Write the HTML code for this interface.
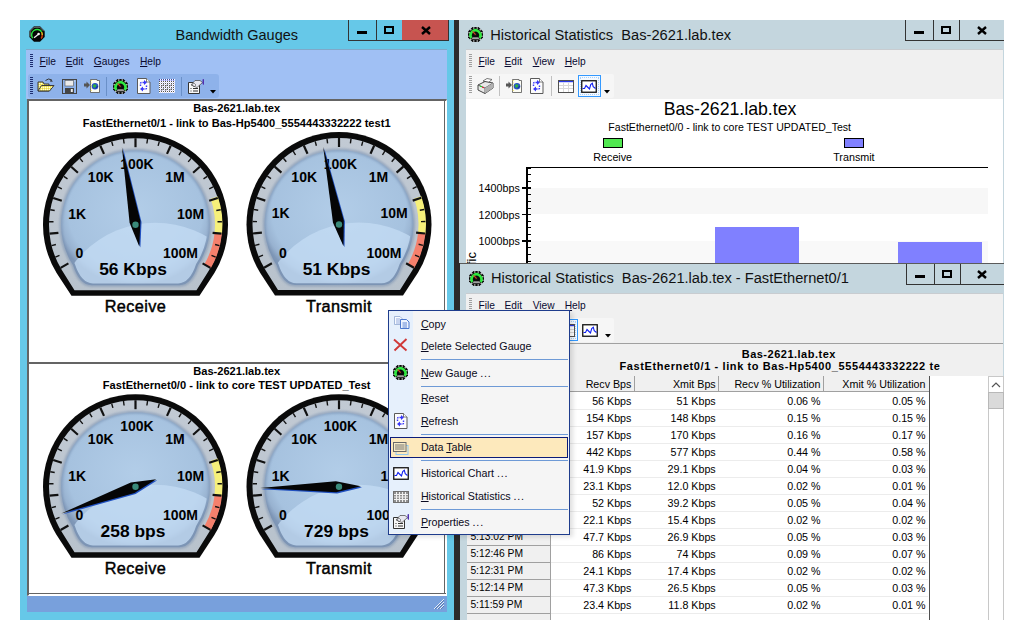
<!DOCTYPE html>
<html><head><meta charset="utf-8"><style>
*{margin:0;padding:0;box-sizing:border-box}
body{width:1024px;height:640px;background:#fff;position:relative;overflow:hidden;font-family:"Liberation Sans", sans-serif;color:#000}
.a{position:absolute}
.t{position:absolute;white-space:pre;line-height:1}
u{text-decoration:underline}
</style></head><body>
<div class="a" style="left:20px;top:20px;width:434px;height:600px;background:#66c8e8"></div>
<svg class="a" style="left:29px;top:26px" width="16" height="16" viewBox="0 0 16 16">
<path d="M5,0.3 H11 L15.7,5 V11 L11,15.7 H5 L0.3,11 V5Z" fill="#050505"/>
<path d="M5.2,1.2 H10.8 L14.8,5.2" fill="none" stroke="#c8c8c8" stroke-width="0.6"/><path d="M1.2,10.8 V5.2 L5.2,1.2" fill="none" stroke="#c8c8c8" stroke-width="0.6"/>
<path d="M3.6,12.2 A5.2,5.2 0 0 1 12.6,5.8" fill="none" stroke="#28e040" stroke-width="1.5"/>
<path d="M12.6,6 A5.2,5.2 0 0 1 13.2,9" fill="none" stroke="#f0c020" stroke-width="1.5"/>
<path d="M13.2,9 A5.2,5.2 0 0 1 12.2,12.5" fill="none" stroke="#d04010" stroke-width="1.5"/>
<line x1="5" y1="11.8" x2="9.5" y2="8.2" stroke="#f0f0f0" stroke-width="1.2"/><circle cx="9.6" cy="8" r="1.3" fill="#fafafa"/></svg>
<div class="t" style="left:175.5px;top:27.53px;font-size:14.5px;font-weight:normal;color:#111;">Bandwidth Gauges</div>
<div class="a" style="left:348px;top:20px;width:101px;height:21px;background:#66c8e8;border-left:1px solid #333;border-bottom:1px solid #333"></div>
<div class="a" style="left:376px;top:20px;width:1px;height:21px;background:#333"></div>
<div class="a" style="left:402px;top:20px;width:47px;height:21px;background:#c75450;border-bottom:1px solid #333;border-right:1px solid #333"></div>
<div class="a" style="left:357.0px;top:31px;width:10px;height:3px;background:#000"></div>
<div class="a" style="left:384.0px;top:26px;width:10px;height:8px;border:2px solid #000"></div>
<svg class="a" style="left:420.5px;top:26px" width="10" height="9" viewBox="0 0 10 9"><path d="M1,1 L9,8 M9,1 L1,8" stroke="#000" stroke-width="2.4"/></svg>
<div class="a" style="left:26px;top:49px;width:421px;height:50px;background:#a0c0f4"></div>
<div class="a" style="left:26px;top:49px;width:421px;height:1px;background:#80a8c8"></div>
<div class="a" style="left:28px;top:74px;width:191px;height:24px;background:#8eb2ea;border-radius:3px"></div>
<div class="a" style="left:30px;top:54px;width:3px;height:14px;background:repeating-linear-gradient(#1e2e70 0 1px, transparent 1px 2px)"></div>
<div class="a" style="left:30px;top:77px;width:3px;height:18px;background:repeating-linear-gradient(#1e2e70 0 1px, transparent 1px 2px)"></div>
<div class="t" style="left:39.6px;top:56.77px;font-size:10.2px;font-weight:normal;color:#0a0a30;"><u>F</u>ile</div>
<div class="t" style="left:65.7px;top:56.77px;font-size:10.2px;font-weight:normal;color:#0a0a30;"><u>E</u>dit</div>
<div class="t" style="left:93.8px;top:56.77px;font-size:10.2px;font-weight:normal;color:#0a0a30;"><u>G</u>auges</div>
<div class="t" style="left:140.0px;top:56.77px;font-size:10.2px;font-weight:normal;color:#0a0a30;"><u>H</u>elp</div>
<svg class="a" style="left:37px;top:77px" width="18" height="16" viewBox="0 0 18 16">
<defs><pattern id="fp3777" width="2" height="2" patternUnits="userSpaceOnUse"><rect width="2" height="2" fill="#f8f070"/><rect width="1" height="1" fill="#fffbe0"/><rect x="1" y="1" width="1" height="1" fill="#e0d050"/></pattern></defs>
<path d="M1,5 L1,14 L12,14 L12,7 L7,7 L6,5Z" fill="url(#fp3777)" stroke="#3a3a3a" stroke-width="1"/>
<path d="M1,14 L4.5,8.5 L17,8.5 L12.5,14Z" fill="url(#fp3777)" stroke="#3a3a3a" stroke-width="1"/>
<path d="M8.5,3.5 Q11.5,0.6 15,3.2" fill="none" stroke="#333" stroke-width="1"/><path d="M13.6,2.3 L16,4.5 L13.2,4.8Z" fill="#333"/></svg>
<svg class="a" style="left:62px;top:79px" width="15" height="15" viewBox="0 0 15 15">
<rect x="0.5" y="0.5" width="14" height="14" fill="none" stroke="#444" stroke-width="1"/>
<rect x="3" y="1.5" width="8.5" height="5.5" fill="#ececec" stroke="#555" stroke-width="0.6"/>
<rect x="12.2" y="1.5" width="1" height="1" fill="#eee"/>
<rect x="3" y="9" width="9" height="5" fill="#444"/><rect x="8.8" y="10" width="2" height="3" fill="#eee"/></svg>
<svg class="a" style="left:84px;top:79px" width="18" height="15" viewBox="0 0 18 15">
<path d="M0,4 L2.5,4 L2.5,2 L6,5.5 L2.5,9 L2.5,7 L0,7Z" fill="#555" transform="translate(0,0.5)"/>
<path d="M6.5,0.5 L13,0.5 L13,1.5 L15.5,1.5 L15.5,13.5 L6.5,13.5Z" fill="#fdfdf4" stroke="#555" stroke-width="0.8"/>
<path d="M7.2,1 V13" stroke="#f0e060" stroke-width="1" stroke-dasharray="1 1.5"/>
<circle cx="11" cy="7.2" r="3.3" fill="#2850c8"/><path d="M9,6 Q10.5,4.5 12.5,6 L11.5,8.5 Q10,9 9.2,8Z" fill="#30b040"/><path d="M11.5,9 Q13,8.5 13.6,7" fill="none" stroke="#103080" stroke-width="0.8"/></svg>
<div class="a" style="left:106px;top:77px;width:1px;height:19px;background:#6a90c8"></div>
<svg class="a" style="left:113px;top:79px" width="15" height="15" viewBox="0 0 15 15">
<path d="M4.5,0 H10.5 L15,4.5 V10.5 L10.5,15 H4.5 L0,10.5 V4.5Z" fill="#0a0a0a"/>
<circle cx="7.5" cy="7.5" r="7" fill="#0a0a0a"/><circle cx="13.88" cy="9.21" r="0.75" fill="#f4f4f4"/><circle cx="12.17" cy="12.17" r="0.75" fill="#f4f4f4"/><circle cx="9.21" cy="13.88" r="0.75" fill="#f4f4f4"/><circle cx="5.79" cy="13.88" r="0.75" fill="#f4f4f4"/><circle cx="2.83" cy="12.17" r="0.75" fill="#f4f4f4"/><circle cx="1.12" cy="9.21" r="0.75" fill="#f4f4f4"/><circle cx="1.12" cy="5.79" r="0.75" fill="#f4f4f4"/><circle cx="2.83" cy="2.83" r="0.75" fill="#f4f4f4"/><circle cx="5.79" cy="1.12" r="0.75" fill="#f4f4f4"/><circle cx="9.21" cy="1.12" r="0.75" fill="#f4f4f4"/><circle cx="12.17" cy="2.83" r="0.75" fill="#f4f4f4"/><circle cx="13.88" cy="5.79" r="0.75" fill="#f4f4f4"/>
<path d="M3.4,11 A4.9,4.9 0 1 1 11.6,11" fill="none" stroke="#30e840" stroke-width="2.6"/>
<path d="M3.6,12.2 L11.4,12.2 L10.4,10.2 L4.6,10.2Z" fill="#a0a0a0"/>
<circle cx="7.5" cy="7.5" r="1.8" fill="#111"/>
<line x1="4.6" y1="4.4" x2="7.6" y2="7.6" stroke="#d04020" stroke-width="1.3"/></svg>
<svg class="a" style="left:137px;top:78px" width="14" height="16" viewBox="0 0 14 16">
<path d="M0.5,0.5 L9.5,0.5 L13,4 L13,15.5 L0.5,15.5Z" fill="#fcfcfc" stroke="#5a5a5a" stroke-width="1"/>
<path d="M9.5,0.5 V4 H13" fill="#fff" stroke="#5a5a5a" stroke-width="0.8"/>
<path d="M3.5,8 V5.5 Q3.5,4.5 5,4.5 H7.5" fill="none" stroke="#3838f8" stroke-width="1.4" stroke-dasharray="1.6 0.8"/>
<path d="M7,2 L10,4.5 L7,7Z" fill="#3838f8"/>
<path d="M9.5,7.5 V10 Q9.5,11 8,11 H5.5" fill="none" stroke="#3838f8" stroke-width="1.4" stroke-dasharray="1.6 0.8"/>
<path d="M6,8.5 L3,11 L6,13.5Z" fill="#3838f8"/></svg>
<svg class="a" style="left:159px;top:79px" width="16" height="14" viewBox="0 0 16 14">
<defs><pattern id="gp15979" width="2" height="2" patternUnits="userSpaceOnUse"><rect width="2" height="2" fill="#fff"/><rect width="1" height="1" fill="#555"/><rect x="1" y="1" width="1" height="1" fill="#d8d8f8"/></pattern></defs>
<rect x="0" y="0" width="16" height="14" fill="url(#gp15979)"/>
<path d="M0,1 H15" stroke="#3040f0" stroke-width="1" stroke-dasharray="1 1"/>
<path d="M2,12 L5,9 M6,12 L9,9 M10,12 L13,9 M2,8 L5,5 M6,8 L9,5 M10,8 L13,5" stroke="#555" stroke-width="0.8" opacity="0.6"/></svg>
<div class="a" style="left:181px;top:77px;width:1px;height:19px;background:#6a90c8"></div>
<svg class="a" style="left:188px;top:79px" width="17" height="15" viewBox="0 0 17 15">
<path d="M0.5,3.5 L11.5,3.5 L11.5,14.5 L0.5,14.5Z" fill="#f8f8f8" stroke="#333" stroke-width="1"/>
<path d="M2.5,9.5 H3.5 M5,9.5 H10 M2.5,12 H3.5 M5,12 H10" stroke="#333" stroke-width="1"/>
<path d="M3,6 L7,1.5 L12,1.5 L14.5,3.5 L9,8.5Z" fill="#e8e8f0" stroke="#444" stroke-width="0.7"/>
<path d="M4,6 L6,4 L8,6 L6,8Z" fill="none" stroke="#555" stroke-width="0.6"/>
<path d="M14.5,0.5 L16,0 L16,6 L14.5,5Z" fill="#5030b0"/></svg>
<svg class="a" style="left:210px;top:90px" width="7" height="4"><path d="M0,0 H6 L3,3.5Z" fill="#000"/></svg>
<div class="a" style="left:27px;top:99px;width:420px;height:497px;background:#fff;border-top:2px solid #646464;border-left:2px solid #646464;border-bottom:1px solid #fff;border-right:1px solid #fff"></div>
<div class="a" style="left:29px;top:593px;width:417px;height:1px;background:#646464"></div>
<div class="a" style="left:444px;top:101px;width:1px;height:493px;background:#646464"></div>
<div class="a" style="left:29px;top:362px;width:416px;height:2px;background:#646464"></div>
<div class="a" style="left:27px;top:596px;width:420px;height:16px;background:#78a0dc"></div>
<svg class="a" style="left:433px;top:598px" width="12" height="12"><path d="M11,1 L1,11 M11,4 L4,11 M11,7 L7,11" stroke="#e8eef8" stroke-width="1"/><path d="M11,2 L2,11 M11,5 L5,11 M11,8 L8,11" stroke="#5070a8" stroke-width="0.8"/></svg>
<div class="t" style="left:-63.3px;width:600px;text-align:center;top:103.40px;font-size:11.1px;font-weight:bold;color:#000;">Bas-2621.lab.tex</div>
<div class="t" style="left:-63.3px;width:600px;text-align:center;top:117.50px;font-size:11.1px;font-weight:bold;color:#000;">FastEthernet0/1 - link to Bas-Hp5400_5554443332222 test1</div>
<div class="t" style="left:-63.3px;width:600px;text-align:center;top:365.90px;font-size:11.1px;font-weight:bold;color:#000;">Bas-2621.lab.tex</div>
<div class="t" style="left:-63.3px;width:600px;text-align:center;top:380.00px;font-size:11.1px;font-weight:bold;color:#000;">FastEthernet0/0 - link to core TEST UPDATED_Test</div>
<svg width="1024" height="640" style="position:absolute;left:0;top:0" font-family='"Liberation Sans", sans-serif'>
<defs>
<radialGradient id="face" cx="0.5" cy="0.45" r="0.55">
<stop offset="0" stop-color="#b2cde8"/><stop offset="0.82" stop-color="#a6c2df"/><stop offset="0.93" stop-color="#98b2d0"/><stop offset="1" stop-color="#8098b8"/>
</radialGradient>
<filter id="blur1" x="-10%" y="-10%" width="120%" height="120%"><feGaussianBlur stdDeviation="1"/></filter>
<linearGradient id="band" x1="0" y1="0" x2="0" y2="1">
<stop offset="0" stop-color="#c2cad4"/><stop offset="1" stop-color="#b8c2cc"/>
</linearGradient>
</defs>
<path d="M56.6,273.0 A92.5,92.5 0 1 1 214.4,273.0 L199.5,295.7 L71.5,295.7 Z" fill="#0a0a0a"/>
<path d="M62.1,270.5 A86.5,86.5 0 1 1 208.9,270.5 L196.5,290.2 L74.5,290.2 Z" fill="url(#band)"/>
<path d="M217.8,196.4 A87,87 0 0 1 222.0,233.8 L214.6,233.0 A79.5,79.5 0 0 0 210.7,198.8 Z" fill="#f6f07a"/>
<path d="M222.0,233.8 A87,87 0 0 1 210.8,268.2 L204.3,264.4 A79.5,79.5 0 0 0 214.6,233.0 Z" fill="#f5806c"/>
<path d="M73.0,265.3 A74.5,74.5 0 1 1 198.0,265.3 Q191.5,285.2 179.5,285.2 L91.5,285.2 Q79.5,285.2 73.0,265.3 Z" fill="url(#face)"/>
<path d="M73.0,265.3 A74.5,74.5 0 1 1 198.0,265.3 Q191.5,285.2 179.5,285.2 L91.5,285.2 Q79.5,285.2 73.0,265.3 Z" fill="none" stroke="#7890b0" stroke-width="3" opacity="0.6" filter="url(#blur1)"/>
<g clip-path="url(#fc1)"><circle cx="155.5" cy="324.7" r="102" fill="#c4dcf4" opacity="0.75"/></g>
<clipPath id="fc1"><path d="M73.0,265.3 A74.5,74.5 0 1 1 198.0,265.3 Q191.5,285.2 179.5,285.2 L91.5,285.2 Q79.5,285.2 73.0,265.3 Z" transform="translate(135.5,224.7) scale(0.97) translate(-135.5,-224.7)"/></clipPath>
<line x1="60.6" y1="267.9" x2="68.4" y2="263.4" stroke="#111" stroke-width="2.2"/>
<line x1="55.3" y1="257.1" x2="59.5" y2="255.4" stroke="#111" stroke-width="1.4"/>
<line x1="51.6" y1="245.6" x2="55.9" y2="244.5" stroke="#111" stroke-width="1.4"/>
<line x1="49.5" y1="233.7" x2="58.4" y2="232.8" stroke="#111" stroke-width="2.2"/>
<line x1="49.1" y1="221.7" x2="53.5" y2="221.8" stroke="#111" stroke-width="1.4"/>
<line x1="50.3" y1="209.7" x2="54.7" y2="210.5" stroke="#111" stroke-width="1.4"/>
<line x1="53.2" y1="198.0" x2="61.8" y2="200.8" stroke="#111" stroke-width="2.2"/>
<line x1="57.8" y1="186.8" x2="61.8" y2="188.8" stroke="#111" stroke-width="1.4"/>
<line x1="63.8" y1="176.3" x2="67.5" y2="178.8" stroke="#111" stroke-width="1.4"/>
<line x1="71.2" y1="166.8" x2="77.9" y2="172.8" stroke="#111" stroke-width="2.2"/>
<line x1="79.9" y1="158.4" x2="82.8" y2="161.9" stroke="#111" stroke-width="1.4"/>
<line x1="89.7" y1="151.3" x2="92.0" y2="155.2" stroke="#111" stroke-width="1.4"/>
<line x1="100.3" y1="145.7" x2="104.0" y2="153.9" stroke="#111" stroke-width="2.2"/>
<line x1="111.7" y1="141.6" x2="112.9" y2="145.9" stroke="#111" stroke-width="1.4"/>
<line x1="123.5" y1="139.0" x2="124.1" y2="143.5" stroke="#111" stroke-width="1.4"/>
<line x1="135.5" y1="138.2" x2="135.5" y2="147.2" stroke="#111" stroke-width="2.2"/>
<line x1="147.5" y1="139.0" x2="146.9" y2="143.5" stroke="#111" stroke-width="1.4"/>
<line x1="159.3" y1="141.6" x2="158.1" y2="145.9" stroke="#111" stroke-width="1.4"/>
<line x1="170.7" y1="145.7" x2="167.0" y2="153.9" stroke="#111" stroke-width="2.2"/>
<line x1="181.3" y1="151.3" x2="179.0" y2="155.2" stroke="#111" stroke-width="1.4"/>
<line x1="191.1" y1="158.4" x2="188.2" y2="161.9" stroke="#111" stroke-width="1.4"/>
<line x1="199.8" y1="166.8" x2="193.1" y2="172.8" stroke="#111" stroke-width="2.2"/>
<line x1="207.2" y1="176.3" x2="203.5" y2="178.8" stroke="#111" stroke-width="1.4"/>
<line x1="213.2" y1="186.8" x2="209.2" y2="188.8" stroke="#111" stroke-width="1.4"/>
<line x1="217.8" y1="198.0" x2="209.2" y2="200.8" stroke="#111" stroke-width="2.2"/>
<line x1="220.7" y1="209.7" x2="216.3" y2="210.5" stroke="#111" stroke-width="1.4"/>
<line x1="221.9" y1="221.7" x2="217.5" y2="221.8" stroke="#111" stroke-width="1.4"/>
<line x1="221.5" y1="233.7" x2="212.6" y2="232.8" stroke="#111" stroke-width="2.2"/>
<line x1="219.4" y1="245.6" x2="215.1" y2="244.5" stroke="#111" stroke-width="1.4"/>
<line x1="215.7" y1="257.1" x2="211.5" y2="255.4" stroke="#111" stroke-width="1.4"/>
<line x1="210.4" y1="267.9" x2="202.6" y2="263.4" stroke="#111" stroke-width="2.2"/>
<text transform="translate(136.9,169.3) scale(1,1.06)" text-anchor="middle" font-size="14" font-weight="bold">100K</text>
<text transform="translate(100.7,182.4) scale(1,1.06)" text-anchor="middle" font-size="14" font-weight="bold">10K</text>
<text transform="translate(175.0,182.4) scale(1,1.06)" text-anchor="middle" font-size="14" font-weight="bold">1M</text>
<text transform="translate(77.2,218.5) scale(1,1.06)" text-anchor="middle" font-size="14" font-weight="bold">1K</text>
<text transform="translate(190.5,218.5) scale(1,1.06)" text-anchor="middle" font-size="14" font-weight="bold">10M</text>
<text transform="translate(79.5,258.4) scale(1,1.06)" text-anchor="middle" font-size="14" font-weight="bold">0</text>
<text transform="translate(180.5,258.4) scale(1,1.06)" text-anchor="middle" font-size="14" font-weight="bold">100M</text>
<text x="133.0" y="275.4" text-anchor="middle" font-size="17.4" font-weight="bold">56 Kbps</text>
<text x="135.5" y="311.7" text-anchor="middle" font-size="16.3" stroke="#000" stroke-width="0.45" letter-spacing="0.4">Receive</text>
<polygon points="121.9,146.9 129.6,222.7 139.3,246.4 140.4,220.8" fill="#2050c0" transform="translate(1.1,1.1)"/>
<polygon points="121.9,146.9 129.6,222.7 139.3,246.4 140.4,220.8" fill="#050505"/>
<circle cx="135.5" cy="224.7" r="3.2" fill="#3a8a7a"/>
<path d="M260.1,272.8 A92.5,92.5 0 1 1 417.9,272.8 L403.0,295.5 L275.0,295.5 Z" fill="#0a0a0a"/>
<path d="M265.6,270.3 A86.5,86.5 0 1 1 412.4,270.3 L400.0,290.0 L278.0,290.0 Z" fill="url(#band)"/>
<path d="M421.3,196.2 A87,87 0 0 1 425.5,233.6 L418.1,232.8 A79.5,79.5 0 0 0 414.2,198.6 Z" fill="#f6f07a"/>
<path d="M425.5,233.6 A87,87 0 0 1 414.3,268.0 L407.8,264.2 A79.5,79.5 0 0 0 418.1,232.8 Z" fill="#f5806c"/>
<path d="M276.5,265.1 A74.5,74.5 0 1 1 401.5,265.1 Q395.0,285.0 383.0,285.0 L295.0,285.0 Q283.0,285.0 276.5,265.1 Z" fill="url(#face)"/>
<path d="M276.5,265.1 A74.5,74.5 0 1 1 401.5,265.1 Q395.0,285.0 383.0,285.0 L295.0,285.0 Q283.0,285.0 276.5,265.1 Z" fill="none" stroke="#7890b0" stroke-width="3" opacity="0.6" filter="url(#blur1)"/>
<g clip-path="url(#fc2)"><circle cx="359" cy="324.5" r="102" fill="#c4dcf4" opacity="0.75"/></g>
<clipPath id="fc2"><path d="M276.5,265.1 A74.5,74.5 0 1 1 401.5,265.1 Q395.0,285.0 383.0,285.0 L295.0,285.0 Q283.0,285.0 276.5,265.1 Z" transform="translate(339.0,224.5) scale(0.97) translate(-339.0,-224.5)"/></clipPath>
<line x1="264.1" y1="267.8" x2="271.9" y2="263.2" stroke="#111" stroke-width="2.2"/>
<line x1="258.8" y1="256.9" x2="263.0" y2="255.2" stroke="#111" stroke-width="1.4"/>
<line x1="255.1" y1="245.4" x2="259.4" y2="244.3" stroke="#111" stroke-width="1.4"/>
<line x1="253.0" y1="233.5" x2="261.9" y2="232.6" stroke="#111" stroke-width="2.2"/>
<line x1="252.6" y1="221.5" x2="257.0" y2="221.6" stroke="#111" stroke-width="1.4"/>
<line x1="253.8" y1="209.5" x2="258.2" y2="210.3" stroke="#111" stroke-width="1.4"/>
<line x1="256.7" y1="197.8" x2="265.3" y2="200.6" stroke="#111" stroke-width="2.2"/>
<line x1="261.3" y1="186.6" x2="265.3" y2="188.6" stroke="#111" stroke-width="1.4"/>
<line x1="267.3" y1="176.1" x2="271.0" y2="178.6" stroke="#111" stroke-width="1.4"/>
<line x1="274.7" y1="166.6" x2="281.4" y2="172.6" stroke="#111" stroke-width="2.2"/>
<line x1="283.4" y1="158.2" x2="286.3" y2="161.7" stroke="#111" stroke-width="1.4"/>
<line x1="293.2" y1="151.1" x2="295.5" y2="155.0" stroke="#111" stroke-width="1.4"/>
<line x1="303.8" y1="145.5" x2="307.5" y2="153.7" stroke="#111" stroke-width="2.2"/>
<line x1="315.2" y1="141.4" x2="316.4" y2="145.7" stroke="#111" stroke-width="1.4"/>
<line x1="327.0" y1="138.8" x2="327.6" y2="143.3" stroke="#111" stroke-width="1.4"/>
<line x1="339.0" y1="138.0" x2="339.0" y2="147.0" stroke="#111" stroke-width="2.2"/>
<line x1="351.0" y1="138.8" x2="350.4" y2="143.3" stroke="#111" stroke-width="1.4"/>
<line x1="362.8" y1="141.4" x2="361.6" y2="145.7" stroke="#111" stroke-width="1.4"/>
<line x1="374.2" y1="145.5" x2="370.5" y2="153.7" stroke="#111" stroke-width="2.2"/>
<line x1="384.8" y1="151.1" x2="382.5" y2="155.0" stroke="#111" stroke-width="1.4"/>
<line x1="394.6" y1="158.2" x2="391.7" y2="161.7" stroke="#111" stroke-width="1.4"/>
<line x1="403.3" y1="166.6" x2="396.6" y2="172.6" stroke="#111" stroke-width="2.2"/>
<line x1="410.7" y1="176.1" x2="407.0" y2="178.6" stroke="#111" stroke-width="1.4"/>
<line x1="416.7" y1="186.6" x2="412.7" y2="188.6" stroke="#111" stroke-width="1.4"/>
<line x1="421.3" y1="197.8" x2="412.7" y2="200.6" stroke="#111" stroke-width="2.2"/>
<line x1="424.2" y1="209.5" x2="419.8" y2="210.3" stroke="#111" stroke-width="1.4"/>
<line x1="425.4" y1="221.5" x2="421.0" y2="221.6" stroke="#111" stroke-width="1.4"/>
<line x1="425.0" y1="233.5" x2="416.1" y2="232.6" stroke="#111" stroke-width="2.2"/>
<line x1="422.9" y1="245.4" x2="418.6" y2="244.3" stroke="#111" stroke-width="1.4"/>
<line x1="419.2" y1="256.9" x2="415.0" y2="255.2" stroke="#111" stroke-width="1.4"/>
<line x1="413.9" y1="267.8" x2="406.1" y2="263.2" stroke="#111" stroke-width="2.2"/>
<text transform="translate(340.4,169.1) scale(1,1.06)" text-anchor="middle" font-size="14" font-weight="bold">100K</text>
<text transform="translate(304.2,182.2) scale(1,1.06)" text-anchor="middle" font-size="14" font-weight="bold">10K</text>
<text transform="translate(378.5,182.2) scale(1,1.06)" text-anchor="middle" font-size="14" font-weight="bold">1M</text>
<text transform="translate(280.7,218.3) scale(1,1.06)" text-anchor="middle" font-size="14" font-weight="bold">1K</text>
<text transform="translate(394.0,218.3) scale(1,1.06)" text-anchor="middle" font-size="14" font-weight="bold">10M</text>
<text transform="translate(283.0,258.2) scale(1,1.06)" text-anchor="middle" font-size="14" font-weight="bold">0</text>
<text transform="translate(384.0,258.2) scale(1,1.06)" text-anchor="middle" font-size="14" font-weight="bold">100M</text>
<text x="336.5" y="275.2" text-anchor="middle" font-size="17.4" font-weight="bold">51 Kbps</text>
<text x="339.0" y="311.5" text-anchor="middle" font-size="16.3" stroke="#000" stroke-width="0.45" letter-spacing="0.4">Transmit</text>
<polygon points="323.2,147.1 333.0,222.7 343.4,246.1 343.8,220.5" fill="#2050c0" transform="translate(1.1,1.1)"/>
<polygon points="323.2,147.1 333.0,222.7 343.4,246.1 343.8,220.5" fill="#050505"/>
<circle cx="339" cy="224.5" r="3.2" fill="#3a8a7a"/>
<path d="M56.6,535.0 A92.5,92.5 0 1 1 214.4,535.0 L199.5,557.7 L71.5,557.7 Z" fill="#0a0a0a"/>
<path d="M62.1,532.5 A86.5,86.5 0 1 1 208.9,532.5 L196.5,552.2 L74.5,552.2 Z" fill="url(#band)"/>
<path d="M217.8,458.4 A87,87 0 0 1 222.0,495.8 L214.6,495.0 A79.5,79.5 0 0 0 210.7,460.8 Z" fill="#f6f07a"/>
<path d="M222.0,495.8 A87,87 0 0 1 210.8,530.2 L204.3,526.4 A79.5,79.5 0 0 0 214.6,495.0 Z" fill="#f5806c"/>
<path d="M73.0,527.3 A74.5,74.5 0 1 1 198.0,527.3 Q191.5,547.2 179.5,547.2 L91.5,547.2 Q79.5,547.2 73.0,527.3 Z" fill="url(#face)"/>
<path d="M73.0,527.3 A74.5,74.5 0 1 1 198.0,527.3 Q191.5,547.2 179.5,547.2 L91.5,547.2 Q79.5,547.2 73.0,527.3 Z" fill="none" stroke="#7890b0" stroke-width="3" opacity="0.6" filter="url(#blur1)"/>
<g clip-path="url(#fc3)"><circle cx="155.5" cy="586.7" r="102" fill="#c4dcf4" opacity="0.75"/></g>
<clipPath id="fc3"><path d="M73.0,527.3 A74.5,74.5 0 1 1 198.0,527.3 Q191.5,547.2 179.5,547.2 L91.5,547.2 Q79.5,547.2 73.0,527.3 Z" transform="translate(135.5,486.7) scale(0.97) translate(-135.5,-486.7)"/></clipPath>
<line x1="60.6" y1="530.0" x2="68.4" y2="525.5" stroke="#111" stroke-width="2.2"/>
<line x1="55.3" y1="519.1" x2="59.5" y2="517.4" stroke="#111" stroke-width="1.4"/>
<line x1="51.6" y1="507.6" x2="55.9" y2="506.5" stroke="#111" stroke-width="1.4"/>
<line x1="49.5" y1="495.7" x2="58.4" y2="494.8" stroke="#111" stroke-width="2.2"/>
<line x1="49.1" y1="483.7" x2="53.5" y2="483.8" stroke="#111" stroke-width="1.4"/>
<line x1="50.3" y1="471.7" x2="54.7" y2="472.5" stroke="#111" stroke-width="1.4"/>
<line x1="53.2" y1="460.0" x2="61.8" y2="462.8" stroke="#111" stroke-width="2.2"/>
<line x1="57.8" y1="448.8" x2="61.8" y2="450.8" stroke="#111" stroke-width="1.4"/>
<line x1="63.8" y1="438.3" x2="67.5" y2="440.8" stroke="#111" stroke-width="1.4"/>
<line x1="71.2" y1="428.8" x2="77.9" y2="434.8" stroke="#111" stroke-width="2.2"/>
<line x1="79.9" y1="420.4" x2="82.8" y2="423.9" stroke="#111" stroke-width="1.4"/>
<line x1="89.7" y1="413.3" x2="92.0" y2="417.2" stroke="#111" stroke-width="1.4"/>
<line x1="100.3" y1="407.7" x2="104.0" y2="415.9" stroke="#111" stroke-width="2.2"/>
<line x1="111.7" y1="403.6" x2="112.9" y2="407.9" stroke="#111" stroke-width="1.4"/>
<line x1="123.5" y1="401.0" x2="124.1" y2="405.5" stroke="#111" stroke-width="1.4"/>
<line x1="135.5" y1="400.2" x2="135.5" y2="409.2" stroke="#111" stroke-width="2.2"/>
<line x1="147.5" y1="401.0" x2="146.9" y2="405.5" stroke="#111" stroke-width="1.4"/>
<line x1="159.3" y1="403.6" x2="158.1" y2="407.9" stroke="#111" stroke-width="1.4"/>
<line x1="170.7" y1="407.7" x2="167.0" y2="415.9" stroke="#111" stroke-width="2.2"/>
<line x1="181.3" y1="413.3" x2="179.0" y2="417.2" stroke="#111" stroke-width="1.4"/>
<line x1="191.1" y1="420.4" x2="188.2" y2="423.9" stroke="#111" stroke-width="1.4"/>
<line x1="199.8" y1="428.8" x2="193.1" y2="434.8" stroke="#111" stroke-width="2.2"/>
<line x1="207.2" y1="438.3" x2="203.5" y2="440.8" stroke="#111" stroke-width="1.4"/>
<line x1="213.2" y1="448.8" x2="209.2" y2="450.8" stroke="#111" stroke-width="1.4"/>
<line x1="217.8" y1="460.0" x2="209.2" y2="462.8" stroke="#111" stroke-width="2.2"/>
<line x1="220.7" y1="471.7" x2="216.3" y2="472.5" stroke="#111" stroke-width="1.4"/>
<line x1="221.9" y1="483.7" x2="217.5" y2="483.8" stroke="#111" stroke-width="1.4"/>
<line x1="221.5" y1="495.7" x2="212.6" y2="494.8" stroke="#111" stroke-width="2.2"/>
<line x1="219.4" y1="507.6" x2="215.1" y2="506.5" stroke="#111" stroke-width="1.4"/>
<line x1="215.7" y1="519.1" x2="211.5" y2="517.4" stroke="#111" stroke-width="1.4"/>
<line x1="210.4" y1="529.9" x2="202.6" y2="525.4" stroke="#111" stroke-width="2.2"/>
<text transform="translate(136.9,431.3) scale(1,1.06)" text-anchor="middle" font-size="14" font-weight="bold">100K</text>
<text transform="translate(100.7,444.4) scale(1,1.06)" text-anchor="middle" font-size="14" font-weight="bold">10K</text>
<text transform="translate(175.0,444.4) scale(1,1.06)" text-anchor="middle" font-size="14" font-weight="bold">1M</text>
<text transform="translate(77.2,480.5) scale(1,1.06)" text-anchor="middle" font-size="14" font-weight="bold">1K</text>
<text transform="translate(190.5,480.5) scale(1,1.06)" text-anchor="middle" font-size="14" font-weight="bold">10M</text>
<text transform="translate(79.5,520.4) scale(1,1.06)" text-anchor="middle" font-size="14" font-weight="bold">0</text>
<text transform="translate(180.5,520.4) scale(1,1.06)" text-anchor="middle" font-size="14" font-weight="bold">100M</text>
<text x="133.0" y="537.4" text-anchor="middle" font-size="17.4" font-weight="bold">258 bps</text>
<text x="135.5" y="573.7" text-anchor="middle" font-size="16.3" stroke="#000" stroke-width="0.45" letter-spacing="0.4">Receive</text>
<polygon points="61.2,513.5 134.5,492.9 156.2,479.2 130.8,482.5" fill="#2050c0" transform="translate(1.1,1.1)"/>
<polygon points="61.2,513.5 134.5,492.9 156.2,479.2 130.8,482.5" fill="#050505"/>
<circle cx="135.5" cy="486.7" r="3.2" fill="#3a8a7a"/>
<path d="M260.1,535.0 A92.5,92.5 0 1 1 417.9,535.0 L403.0,557.7 L275.0,557.7 Z" fill="#0a0a0a"/>
<path d="M265.6,532.5 A86.5,86.5 0 1 1 412.4,532.5 L400.0,552.2 L278.0,552.2 Z" fill="url(#band)"/>
<path d="M421.3,458.4 A87,87 0 0 1 425.5,495.8 L418.1,495.0 A79.5,79.5 0 0 0 414.2,460.8 Z" fill="#f6f07a"/>
<path d="M425.5,495.8 A87,87 0 0 1 414.3,530.2 L407.8,526.4 A79.5,79.5 0 0 0 418.1,495.0 Z" fill="#f5806c"/>
<path d="M276.5,527.3 A74.5,74.5 0 1 1 401.5,527.3 Q395.0,547.2 383.0,547.2 L295.0,547.2 Q283.0,547.2 276.5,527.3 Z" fill="url(#face)"/>
<path d="M276.5,527.3 A74.5,74.5 0 1 1 401.5,527.3 Q395.0,547.2 383.0,547.2 L295.0,547.2 Q283.0,547.2 276.5,527.3 Z" fill="none" stroke="#7890b0" stroke-width="3" opacity="0.6" filter="url(#blur1)"/>
<g clip-path="url(#fc4)"><circle cx="359" cy="586.7" r="102" fill="#c4dcf4" opacity="0.75"/></g>
<clipPath id="fc4"><path d="M276.5,527.3 A74.5,74.5 0 1 1 401.5,527.3 Q395.0,547.2 383.0,547.2 L295.0,547.2 Q283.0,547.2 276.5,527.3 Z" transform="translate(339.0,486.7) scale(0.97) translate(-339.0,-486.7)"/></clipPath>
<line x1="264.1" y1="530.0" x2="271.9" y2="525.5" stroke="#111" stroke-width="2.2"/>
<line x1="258.8" y1="519.1" x2="263.0" y2="517.4" stroke="#111" stroke-width="1.4"/>
<line x1="255.1" y1="507.6" x2="259.4" y2="506.5" stroke="#111" stroke-width="1.4"/>
<line x1="253.0" y1="495.7" x2="261.9" y2="494.8" stroke="#111" stroke-width="2.2"/>
<line x1="252.6" y1="483.7" x2="257.0" y2="483.8" stroke="#111" stroke-width="1.4"/>
<line x1="253.8" y1="471.7" x2="258.2" y2="472.5" stroke="#111" stroke-width="1.4"/>
<line x1="256.7" y1="460.0" x2="265.3" y2="462.8" stroke="#111" stroke-width="2.2"/>
<line x1="261.3" y1="448.8" x2="265.3" y2="450.8" stroke="#111" stroke-width="1.4"/>
<line x1="267.3" y1="438.3" x2="271.0" y2="440.8" stroke="#111" stroke-width="1.4"/>
<line x1="274.7" y1="428.8" x2="281.4" y2="434.8" stroke="#111" stroke-width="2.2"/>
<line x1="283.4" y1="420.4" x2="286.3" y2="423.9" stroke="#111" stroke-width="1.4"/>
<line x1="293.2" y1="413.3" x2="295.5" y2="417.2" stroke="#111" stroke-width="1.4"/>
<line x1="303.8" y1="407.7" x2="307.5" y2="415.9" stroke="#111" stroke-width="2.2"/>
<line x1="315.2" y1="403.6" x2="316.4" y2="407.9" stroke="#111" stroke-width="1.4"/>
<line x1="327.0" y1="401.0" x2="327.6" y2="405.5" stroke="#111" stroke-width="1.4"/>
<line x1="339.0" y1="400.2" x2="339.0" y2="409.2" stroke="#111" stroke-width="2.2"/>
<line x1="351.0" y1="401.0" x2="350.4" y2="405.5" stroke="#111" stroke-width="1.4"/>
<line x1="362.8" y1="403.6" x2="361.6" y2="407.9" stroke="#111" stroke-width="1.4"/>
<line x1="374.2" y1="407.7" x2="370.5" y2="415.9" stroke="#111" stroke-width="2.2"/>
<line x1="384.8" y1="413.3" x2="382.5" y2="417.2" stroke="#111" stroke-width="1.4"/>
<line x1="394.6" y1="420.4" x2="391.7" y2="423.9" stroke="#111" stroke-width="1.4"/>
<line x1="403.3" y1="428.8" x2="396.6" y2="434.8" stroke="#111" stroke-width="2.2"/>
<line x1="410.7" y1="438.3" x2="407.0" y2="440.8" stroke="#111" stroke-width="1.4"/>
<line x1="416.7" y1="448.8" x2="412.7" y2="450.8" stroke="#111" stroke-width="1.4"/>
<line x1="421.3" y1="460.0" x2="412.7" y2="462.8" stroke="#111" stroke-width="2.2"/>
<line x1="424.2" y1="471.7" x2="419.8" y2="472.5" stroke="#111" stroke-width="1.4"/>
<line x1="425.4" y1="483.7" x2="421.0" y2="483.8" stroke="#111" stroke-width="1.4"/>
<line x1="425.0" y1="495.7" x2="416.1" y2="494.8" stroke="#111" stroke-width="2.2"/>
<line x1="422.9" y1="507.6" x2="418.6" y2="506.5" stroke="#111" stroke-width="1.4"/>
<line x1="419.2" y1="519.1" x2="415.0" y2="517.4" stroke="#111" stroke-width="1.4"/>
<line x1="413.9" y1="529.9" x2="406.1" y2="525.4" stroke="#111" stroke-width="2.2"/>
<text transform="translate(340.4,431.3) scale(1,1.06)" text-anchor="middle" font-size="14" font-weight="bold">100K</text>
<text transform="translate(304.2,444.4) scale(1,1.06)" text-anchor="middle" font-size="14" font-weight="bold">10K</text>
<text transform="translate(378.5,444.4) scale(1,1.06)" text-anchor="middle" font-size="14" font-weight="bold">1M</text>
<text transform="translate(280.7,480.5) scale(1,1.06)" text-anchor="middle" font-size="14" font-weight="bold">1K</text>
<text transform="translate(394.0,480.5) scale(1,1.06)" text-anchor="middle" font-size="14" font-weight="bold">10M</text>
<text transform="translate(283.0,520.4) scale(1,1.06)" text-anchor="middle" font-size="14" font-weight="bold">0</text>
<text transform="translate(384.0,520.4) scale(1,1.06)" text-anchor="middle" font-size="14" font-weight="bold">100M</text>
<text x="336.5" y="537.4" text-anchor="middle" font-size="17.4" font-weight="bold">729 bps</text>
<text x="339.0" y="573.7" text-anchor="middle" font-size="16.3" stroke="#000" stroke-width="0.45" letter-spacing="0.4">Transmit</text>
<polygon points="260.0,488.1 336.1,492.3 361.0,486.3 335.9,481.3" fill="#2050c0" transform="translate(1.1,1.1)"/>
<polygon points="260.0,488.1 336.1,492.3 361.0,486.3 335.9,481.3" fill="#050505"/>
<circle cx="339" cy="486.7" r="3.2" fill="#3a8a7a"/>
</svg>
<div class="a" style="left:454px;top:20px;width:5px;height:600px;background:#2b2b2b"></div>
<div class="a" style="left:459px;top:20px;width:545px;height:244px;background:#c4d6de"></div>
<svg class="a" style="left:468px;top:27px" width="15" height="15" viewBox="0 0 15 15">
<path d="M4.5,0 H10.5 L15,4.5 V10.5 L10.5,15 H4.5 L0,10.5 V4.5Z" fill="#0a0a0a"/>
<circle cx="7.5" cy="7.5" r="7" fill="#0a0a0a"/><circle cx="13.88" cy="9.21" r="0.75" fill="#f4f4f4"/><circle cx="12.17" cy="12.17" r="0.75" fill="#f4f4f4"/><circle cx="9.21" cy="13.88" r="0.75" fill="#f4f4f4"/><circle cx="5.79" cy="13.88" r="0.75" fill="#f4f4f4"/><circle cx="2.83" cy="12.17" r="0.75" fill="#f4f4f4"/><circle cx="1.12" cy="9.21" r="0.75" fill="#f4f4f4"/><circle cx="1.12" cy="5.79" r="0.75" fill="#f4f4f4"/><circle cx="2.83" cy="2.83" r="0.75" fill="#f4f4f4"/><circle cx="5.79" cy="1.12" r="0.75" fill="#f4f4f4"/><circle cx="9.21" cy="1.12" r="0.75" fill="#f4f4f4"/><circle cx="12.17" cy="2.83" r="0.75" fill="#f4f4f4"/><circle cx="13.88" cy="5.79" r="0.75" fill="#f4f4f4"/>
<path d="M3.4,11 A4.9,4.9 0 1 1 11.6,11" fill="none" stroke="#30e840" stroke-width="2.6"/>
<path d="M3.6,12.2 L11.4,12.2 L10.4,10.2 L4.6,10.2Z" fill="#a0a0a0"/>
<circle cx="7.5" cy="7.5" r="1.8" fill="#111"/>
<line x1="4.6" y1="4.4" x2="7.6" y2="7.6" stroke="#d04020" stroke-width="1.3"/></svg>
<div class="t" style="left:490.3px;top:27.60px;font-size:14.65px;font-weight:normal;color:#111;">Historical Statistics  Bas-2621.lab.tex</div>
<div class="a" style="left:905px;top:20px;width:99px;height:21px;background:#c4d6de;border-left:1px solid #333;border-bottom:1px solid #333"></div>
<div class="a" style="left:933px;top:20px;width:1px;height:21px;background:#333"></div>
<div class="a" style="left:959px;top:20px;width:1px;height:21px;background:#333"></div>
<div class="a" style="left:914.0px;top:31px;width:10px;height:3px;background:#000"></div>
<div class="a" style="left:941.0px;top:26px;width:10px;height:8px;border:2px solid #000"></div>
<svg class="a" style="left:976.5px;top:26px" width="10" height="9" viewBox="0 0 10 9"><path d="M1,1 L9,8 M9,1 L1,8" stroke="#000" stroke-width="2.4"/></svg>
<div class="a" style="left:466px;top:49px;width:537px;height:50px;background:#f0f0f0"></div>
<div class="a" style="left:466px;top:49px;width:537px;height:1px;background:#c8ccd0"></div>
<div class="a" style="left:466px;top:74px;width:148px;height:24px;background:#f6f6f6;border-radius:2px"></div>
<div class="a" style="left:469px;top:54px;width:3px;height:14px;background:repeating-linear-gradient(#a0a0a0 0 1px, transparent 1px 2px)"></div>
<div class="a" style="left:469px;top:76px;width:3px;height:18px;background:repeating-linear-gradient(#a0a0a0 0 1px, transparent 1px 2px)"></div>
<div class="t" style="left:478.4px;top:56.67px;font-size:10.2px;font-weight:normal;color:#0a0a30;"><u>F</u>ile</div>
<div class="t" style="left:504.5px;top:56.67px;font-size:10.2px;font-weight:normal;color:#0a0a30;"><u>E</u>dit</div>
<div class="t" style="left:532.7px;top:56.67px;font-size:10.2px;font-weight:normal;color:#0a0a30;"><u>V</u>iew</div>
<div class="t" style="left:564.7px;top:56.67px;font-size:10.2px;font-weight:normal;color:#0a0a30;"><u>H</u>elp</div>
<svg class="a" style="left:477px;top:78px" width="17" height="16" viewBox="0 0 17 16">
<path d="M6,3 L10,0.5 L15,1.5 L11,5Z" fill="#fff" stroke="#555" stroke-width="0.8"/>
<path d="M1,7 L8,3.5 L16,5 L16,10 L8,15.5 L1,12Z" fill="#e8e8e8" stroke="#333" stroke-width="0.9"/>
<path d="M1,7 L8,10 L16,5 M8,10 V15.5" fill="none" stroke="#444" stroke-width="0.8"/>
<path d="M8,10 L16,5 L16,10 L8,15.5Z" fill="#b0b0b0"/>
<rect x="3" y="7.6" width="2" height="1" fill="#20d020" transform="rotate(20 3 7.6)"/><rect x="5.3" y="8.6" width="1.8" height="1" fill="#e02020" transform="rotate(20 5.3 8.6)"/></svg>
<div class="a" style="left:499px;top:76px;width:1px;height:20px;background:#c0c0c0"></div>
<svg class="a" style="left:506px;top:79px" width="18" height="15" viewBox="0 0 18 15">
<path d="M0,4 L2.5,4 L2.5,2 L6,5.5 L2.5,9 L2.5,7 L0,7Z" fill="#555" transform="translate(0,0.5)"/>
<path d="M6.5,0.5 L13,0.5 L13,1.5 L15.5,1.5 L15.5,13.5 L6.5,13.5Z" fill="#fdfdf4" stroke="#555" stroke-width="0.8"/>
<path d="M7.2,1 V13" stroke="#f0e060" stroke-width="1" stroke-dasharray="1 1.5"/>
<circle cx="11" cy="7.2" r="3.3" fill="#2850c8"/><path d="M9,6 Q10.5,4.5 12.5,6 L11.5,8.5 Q10,9 9.2,8Z" fill="#30b040"/><path d="M11.5,9 Q13,8.5 13.6,7" fill="none" stroke="#103080" stroke-width="0.8"/></svg>
<svg class="a" style="left:530px;top:78px" width="14" height="16" viewBox="0 0 14 16">
<path d="M0.5,0.5 L9.5,0.5 L13,4 L13,15.5 L0.5,15.5Z" fill="#fcfcfc" stroke="#5a5a5a" stroke-width="1"/>
<path d="M9.5,0.5 V4 H13" fill="#fff" stroke="#5a5a5a" stroke-width="0.8"/>
<path d="M3.5,8 V5.5 Q3.5,4.5 5,4.5 H7.5" fill="none" stroke="#3838f8" stroke-width="1.4" stroke-dasharray="1.6 0.8"/>
<path d="M7,2 L10,4.5 L7,7Z" fill="#3838f8"/>
<path d="M9.5,7.5 V10 Q9.5,11 8,11 H5.5" fill="none" stroke="#3838f8" stroke-width="1.4" stroke-dasharray="1.6 0.8"/>
<path d="M6,8.5 L3,11 L6,13.5Z" fill="#3838f8"/></svg>
<div class="a" style="left:551px;top:76px;width:1px;height:20px;background:#c0c0c0"></div>
<svg class="a" style="left:558px;top:80px" width="16" height="13" viewBox="0 0 16 13">
<rect x="0.5" y="0.5" width="15" height="12" fill="#fff" stroke="#505050" stroke-width="1"/>
<rect x="1" y="1" width="14" height="1.2" fill="#2838e8"/>
<path d="M5.5,2.5 V12 M10.5,2.5 V12 M1,5.5 H15 M1,8.5 H15" stroke="#d8d8d8" stroke-width="1"/></svg>
<div class="a" style="left:578px;top:75px;width:23px;height:22px;background:#f4f9ff;border:1px solid #3399ff;outline:1px dotted #a8d0f8;outline-offset:-3px"></div>
<svg class="a" style="left:581px;top:80px" width="16" height="13" viewBox="0 0 16 13">
<rect x="0.75" y="0.75" width="14.5" height="11.5" fill="#fff" stroke="#111" stroke-width="1.3"/>
<path d="M1.5,8.5 L3.5,8.5 L5,5.5 L7,7.5 L8.5,9 L9.7,4.5 L11.3,3.2 L12.2,6.7 L14.5,8.5" fill="none" stroke="#1020f0" stroke-width="1.1"/></svg>
<svg class="a" style="left:604px;top:90px" width="7" height="4"><path d="M0,0 H6 L3,3.5Z" fill="#000"/></svg>
<div class="a" style="left:466px;top:99px;width:537px;height:165px;background:#fff"></div>
<div class="a" style="left:528px;top:188px;width:460px;height:26px;background:#f7f7f7"></div>
<div class="a" style="left:528px;top:241px;width:460px;height:23px;background:#f9f9f9"></div>
<div class="a" style="left:715px;top:227px;width:84px;height:37px;background:#8080ff"></div>
<div class="a" style="left:898px;top:242px;width:84px;height:22px;background:#8080ff"></div>
<div class="a" style="left:526.2px;top:166.8px;width:1.6px;height:98px;background:#000"></div>
<div class="a" style="left:526.2px;top:166.8px;width:462px;height:1.5px;background:#000"></div>
<div class="a" style="left:527px;top:260.6px;width:4px;height:1px;background:#000"></div>
<div class="a" style="left:527px;top:253.9px;width:4px;height:1px;background:#000"></div>
<div class="a" style="left:527px;top:247.3px;width:4px;height:1px;background:#000"></div>
<div class="a" style="left:522px;top:240.4px;width:9px;height:1.5px;background:#000"></div>
<div class="a" style="left:527px;top:234.1px;width:4px;height:1px;background:#000"></div>
<div class="a" style="left:527px;top:227.4px;width:4px;height:1px;background:#000"></div>
<div class="a" style="left:527px;top:220.8px;width:4px;height:1px;background:#000"></div>
<div class="a" style="left:522px;top:213.9px;width:9px;height:1.5px;background:#000"></div>
<div class="a" style="left:527px;top:207.6px;width:4px;height:1px;background:#000"></div>
<div class="a" style="left:527px;top:200.9px;width:4px;height:1px;background:#000"></div>
<div class="a" style="left:527px;top:194.3px;width:4px;height:1px;background:#000"></div>
<div class="a" style="left:522px;top:187.4px;width:9px;height:1.5px;background:#000"></div>
<div class="a" style="left:527px;top:181.1px;width:4px;height:1px;background:#000"></div>
<div class="a" style="left:527px;top:174.4px;width:4px;height:1px;background:#000"></div>
<div class="a" style="left:527px;top:167.8px;width:4px;height:1px;background:#000"></div>
<div class="t" style="left:-80.2px;width:600px;text-align:right;top:183.20px;font-size:10.75px;font-weight:normal;color:#000;">1400bps</div>
<div class="t" style="left:-80.2px;width:600px;text-align:right;top:209.50px;font-size:10.75px;font-weight:normal;color:#000;">1200bps</div>
<div class="t" style="left:-80.2px;width:600px;text-align:right;top:236.10px;font-size:10.75px;font-weight:normal;color:#000;">1000bps</div>
<div class="t" style="left:465px;top:452px;width:200px;text-align:right;font-size:13px;transform:rotate(-90deg);transform-origin:0 0;">Traffic</div>
<div class="t" style="left:430.0px;width:600px;text-align:center;top:100.82px;font-size:17.7px;font-weight:normal;color:#000;">Bas-2621.lab.tex</div>
<div class="t" style="left:429.7px;width:600px;text-align:center;top:122.06px;font-size:10.56px;font-weight:normal;color:#000;">FastEthernet0/0 - link to core TEST UPDATED_Test</div>
<div class="a" style="left:603px;top:138px;width:20px;height:10px;background:#50e850;border:1px solid #000"></div>
<div class="a" style="left:844px;top:138px;width:20px;height:10px;background:#8080ff;border:1px solid #000"></div>
<div class="t" style="left:312.7px;width:600px;text-align:center;top:152.40px;font-size:10.75px;font-weight:normal;color:#000;">Receive</div>
<div class="t" style="left:553.9px;width:600px;text-align:center;top:152.40px;font-size:10.75px;font-weight:normal;color:#000;">Transmit</div>
<div class="a" style="left:454px;top:263px;width:6px;height:357px;background:#2b2b2b"></div>
<div class="a" style="left:460px;top:263px;width:544px;height:357px;background:#c4d6de;border-top:1px solid #5a5a5a"></div>
<svg class="a" style="left:469px;top:271px" width="15" height="15" viewBox="0 0 15 15">
<path d="M4.5,0 H10.5 L15,4.5 V10.5 L10.5,15 H4.5 L0,10.5 V4.5Z" fill="#0a0a0a"/>
<circle cx="7.5" cy="7.5" r="7" fill="#0a0a0a"/><circle cx="13.88" cy="9.21" r="0.75" fill="#f4f4f4"/><circle cx="12.17" cy="12.17" r="0.75" fill="#f4f4f4"/><circle cx="9.21" cy="13.88" r="0.75" fill="#f4f4f4"/><circle cx="5.79" cy="13.88" r="0.75" fill="#f4f4f4"/><circle cx="2.83" cy="12.17" r="0.75" fill="#f4f4f4"/><circle cx="1.12" cy="9.21" r="0.75" fill="#f4f4f4"/><circle cx="1.12" cy="5.79" r="0.75" fill="#f4f4f4"/><circle cx="2.83" cy="2.83" r="0.75" fill="#f4f4f4"/><circle cx="5.79" cy="1.12" r="0.75" fill="#f4f4f4"/><circle cx="9.21" cy="1.12" r="0.75" fill="#f4f4f4"/><circle cx="12.17" cy="2.83" r="0.75" fill="#f4f4f4"/><circle cx="13.88" cy="5.79" r="0.75" fill="#f4f4f4"/>
<path d="M3.4,11 A4.9,4.9 0 1 1 11.6,11" fill="none" stroke="#30e840" stroke-width="2.6"/>
<path d="M3.6,12.2 L11.4,12.2 L10.4,10.2 L4.6,10.2Z" fill="#a0a0a0"/>
<circle cx="7.5" cy="7.5" r="1.8" fill="#111"/>
<line x1="4.6" y1="4.4" x2="7.6" y2="7.6" stroke="#d04020" stroke-width="1.3"/></svg>
<div class="t" style="left:490.9px;top:271.20px;font-size:14.65px;font-weight:normal;color:#111;">Historical Statistics  Bas-2621.lab.tex - FastEthernet0/1</div>
<div class="a" style="left:906px;top:264px;width:98px;height:21px;background:#c4d6de;border-left:1px solid #333;border-bottom:1px solid #333"></div>
<div class="a" style="left:934px;top:264px;width:1px;height:21px;background:#333"></div>
<div class="a" style="left:960px;top:264px;width:1px;height:21px;background:#333"></div>
<div class="a" style="left:915.0px;top:275px;width:10px;height:3px;background:#000"></div>
<div class="a" style="left:942.0px;top:270px;width:10px;height:8px;border:2px solid #000"></div>
<svg class="a" style="left:977.0px;top:270px" width="10" height="9" viewBox="0 0 10 9"><path d="M1,1 L9,8 M9,1 L1,8" stroke="#000" stroke-width="2.4"/></svg>
<div class="a" style="left:466px;top:293px;width:537px;height:50px;background:#f0f0f0"></div>
<div class="a" style="left:466px;top:293px;width:537px;height:1px;background:#c8ccd0"></div>
<div class="a" style="left:466px;top:318px;width:148px;height:24px;background:#f6f6f6;border-radius:2px"></div>
<div class="a" style="left:469px;top:298px;width:3px;height:14px;background:repeating-linear-gradient(#a0a0a0 0 1px, transparent 1px 2px)"></div>
<div class="a" style="left:469px;top:320px;width:3px;height:18px;background:repeating-linear-gradient(#a0a0a0 0 1px, transparent 1px 2px)"></div>
<div class="t" style="left:478.4px;top:300.97px;font-size:10.2px;font-weight:normal;color:#0a0a30;"><u>F</u>ile</div>
<div class="t" style="left:504.5px;top:300.97px;font-size:10.2px;font-weight:normal;color:#0a0a30;"><u>E</u>dit</div>
<div class="t" style="left:532.7px;top:300.97px;font-size:10.2px;font-weight:normal;color:#0a0a30;"><u>V</u>iew</div>
<div class="t" style="left:564.7px;top:300.97px;font-size:10.2px;font-weight:normal;color:#0a0a30;"><u>H</u>elp</div>
<div class="a" style="left:555px;top:319px;width:23px;height:22px;background:#f4f9ff;border:1px solid #3399ff;outline:1px dotted #a8d0f8;outline-offset:-3px"></div>
<svg class="a" style="left:559px;top:324px" width="16" height="13" viewBox="0 0 16 13">
<rect x="0.5" y="0.5" width="15" height="12" fill="#fff" stroke="#505050" stroke-width="1"/>
<rect x="1" y="1" width="14" height="1.2" fill="#2838e8"/>
<path d="M5.5,2.5 V12 M10.5,2.5 V12 M1,5.5 H15 M1,8.5 H15" stroke="#d8d8d8" stroke-width="1"/></svg>
<svg class="a" style="left:582px;top:324px" width="16" height="13" viewBox="0 0 16 13">
<rect x="0.75" y="0.75" width="14.5" height="11.5" fill="#fff" stroke="#111" stroke-width="1.3"/>
<path d="M1.5,8.5 L3.5,8.5 L5,5.5 L7,7.5 L8.5,9 L9.7,4.5 L11.3,3.2 L12.2,6.7 L14.5,8.5" fill="none" stroke="#1020f0" stroke-width="1.1"/></svg>
<svg class="a" style="left:605px;top:334px" width="6" height="4"><path d="M0,0 H6 L3,3.5Z" fill="#000"/></svg>
<div class="a" style="left:466px;top:343px;width:537px;height:277px;background:#fff;border-top:1px solid #a0a0a0"></div>
<div class="a" style="left:466px;top:344px;width:537px;height:32px;background:#f0f0f0"></div>
<div class="t" style="left:488.8px;width:600px;text-align:center;top:348.69px;font-size:11px;font-weight:bold;color:#000;letter-spacing:0.5px">Bas-2621.lab.tex</div>
<div class="a" style="left:466px;top:360px;width:474px;height:16px;overflow:hidden"><div class="t" style="left:22.8px;width:600px;text-align:center;top:1.49px;font-size:11px;font-weight:bold;color:#000;letter-spacing:0.6px">FastEthernet0/1 - link to Bas-Hp5400_5554443332222 test1</div></div>
<div class="a" style="left:466px;top:376px;width:463px;height:16px;background:#f0f0f0;border-bottom:1px solid #a0a0a0"></div>
<div class="a" style="left:550px;top:376px;width:1px;height:16px;background:#a0a0a0"></div>
<div class="a" style="left:634px;top:376px;width:1px;height:16px;background:#a0a0a0"></div>
<div class="a" style="left:718px;top:376px;width:1px;height:16px;background:#a0a0a0"></div>
<div class="a" style="left:823px;top:376px;width:1px;height:16px;background:#a0a0a0"></div>
<div class="a" style="left:928.8px;top:376px;width:1.4px;height:244px;background:#505050"></div>
<div class="t" style="left:31.4px;width:600px;text-align:right;top:378.64px;font-size:10.7px;font-weight:normal;color:#000;">Recv Bps</div>
<div class="t" style="left:115.7px;width:600px;text-align:right;top:378.64px;font-size:10.7px;font-weight:normal;color:#000;">Xmit Bps</div>
<div class="t" style="left:220.5px;width:600px;text-align:right;top:378.64px;font-size:10.7px;font-weight:normal;color:#000;">Recv % Utilization</div>
<div class="t" style="left:325.5px;width:600px;text-align:right;top:378.64px;font-size:10.7px;font-weight:normal;color:#000;">Xmit % Utilization</div>
<div class="a" style="left:467px;top:392px;width:84px;height:228px;background:#f0f0f0;border-right:1px solid #a0a0a0"></div>
<div class="a" style="left:466px;top:392px;width:1px;height:228px;background:#c4d6de"></div>
<div class="a" style="left:467px;top:409.0px;width:84px;height:1px;background:#a0a0a0"></div>
<div class="a" style="left:551px;top:409.0px;width:377px;height:1px;background:#ececec"></div>
<div class="t" style="left:470.4px;top:396.38px;font-size:10.3px;font-weight:normal;color:#000;">5:13:46 PM</div>
<div class="t" style="left:31.4px;width:600px;text-align:right;top:396.04px;font-size:10.7px;font-weight:normal;color:#000;">56 Kbps</div>
<div class="t" style="left:115.7px;width:600px;text-align:right;top:396.04px;font-size:10.7px;font-weight:normal;color:#000;">51 Kbps</div>
<div class="t" style="left:220.5px;width:600px;text-align:right;top:396.04px;font-size:10.7px;font-weight:normal;color:#000;">0.06 %</div>
<div class="t" style="left:325.5px;width:600px;text-align:right;top:396.04px;font-size:10.7px;font-weight:normal;color:#000;">0.05 %</div>
<div class="a" style="left:467px;top:426.0px;width:84px;height:1px;background:#a0a0a0"></div>
<div class="a" style="left:551px;top:426.0px;width:377px;height:1px;background:#ececec"></div>
<div class="t" style="left:470.4px;top:413.38px;font-size:10.3px;font-weight:normal;color:#000;">5:13:31 PM</div>
<div class="t" style="left:31.4px;width:600px;text-align:right;top:413.04px;font-size:10.7px;font-weight:normal;color:#000;">154 Kbps</div>
<div class="t" style="left:115.7px;width:600px;text-align:right;top:413.04px;font-size:10.7px;font-weight:normal;color:#000;">148 Kbps</div>
<div class="t" style="left:220.5px;width:600px;text-align:right;top:413.04px;font-size:10.7px;font-weight:normal;color:#000;">0.15 %</div>
<div class="t" style="left:325.5px;width:600px;text-align:right;top:413.04px;font-size:10.7px;font-weight:normal;color:#000;">0.15 %</div>
<div class="a" style="left:467px;top:443.0px;width:84px;height:1px;background:#a0a0a0"></div>
<div class="a" style="left:551px;top:443.0px;width:377px;height:1px;background:#ececec"></div>
<div class="t" style="left:470.4px;top:430.38px;font-size:10.3px;font-weight:normal;color:#000;">5:13:15 PM</div>
<div class="t" style="left:31.4px;width:600px;text-align:right;top:430.04px;font-size:10.7px;font-weight:normal;color:#000;">157 Kbps</div>
<div class="t" style="left:115.7px;width:600px;text-align:right;top:430.04px;font-size:10.7px;font-weight:normal;color:#000;">170 Kbps</div>
<div class="t" style="left:220.5px;width:600px;text-align:right;top:430.04px;font-size:10.7px;font-weight:normal;color:#000;">0.16 %</div>
<div class="t" style="left:325.5px;width:600px;text-align:right;top:430.04px;font-size:10.7px;font-weight:normal;color:#000;">0.17 %</div>
<div class="a" style="left:467px;top:460.0px;width:84px;height:1px;background:#a0a0a0"></div>
<div class="a" style="left:551px;top:460.0px;width:377px;height:1px;background:#ececec"></div>
<div class="t" style="left:470.4px;top:447.38px;font-size:10.3px;font-weight:normal;color:#000;">5:13:00 PM</div>
<div class="t" style="left:31.4px;width:600px;text-align:right;top:447.04px;font-size:10.7px;font-weight:normal;color:#000;">442 Kbps</div>
<div class="t" style="left:115.7px;width:600px;text-align:right;top:447.04px;font-size:10.7px;font-weight:normal;color:#000;">577 Kbps</div>
<div class="t" style="left:220.5px;width:600px;text-align:right;top:447.04px;font-size:10.7px;font-weight:normal;color:#000;">0.44 %</div>
<div class="t" style="left:325.5px;width:600px;text-align:right;top:447.04px;font-size:10.7px;font-weight:normal;color:#000;">0.58 %</div>
<div class="a" style="left:467px;top:477.0px;width:84px;height:1px;background:#a0a0a0"></div>
<div class="a" style="left:551px;top:477.0px;width:377px;height:1px;background:#ececec"></div>
<div class="t" style="left:470.4px;top:464.38px;font-size:10.3px;font-weight:normal;color:#000;">5:13:45 PM</div>
<div class="t" style="left:31.4px;width:600px;text-align:right;top:464.04px;font-size:10.7px;font-weight:normal;color:#000;">41.9 Kbps</div>
<div class="t" style="left:115.7px;width:600px;text-align:right;top:464.04px;font-size:10.7px;font-weight:normal;color:#000;">29.1 Kbps</div>
<div class="t" style="left:220.5px;width:600px;text-align:right;top:464.04px;font-size:10.7px;font-weight:normal;color:#000;">0.04 %</div>
<div class="t" style="left:325.5px;width:600px;text-align:right;top:464.04px;font-size:10.7px;font-weight:normal;color:#000;">0.03 %</div>
<div class="a" style="left:467px;top:494.0px;width:84px;height:1px;background:#a0a0a0"></div>
<div class="a" style="left:551px;top:494.0px;width:377px;height:1px;background:#ececec"></div>
<div class="t" style="left:470.4px;top:481.38px;font-size:10.3px;font-weight:normal;color:#000;">5:13:30 PM</div>
<div class="t" style="left:31.4px;width:600px;text-align:right;top:481.04px;font-size:10.7px;font-weight:normal;color:#000;">23.1 Kbps</div>
<div class="t" style="left:115.7px;width:600px;text-align:right;top:481.04px;font-size:10.7px;font-weight:normal;color:#000;">12.0 Kbps</div>
<div class="t" style="left:220.5px;width:600px;text-align:right;top:481.04px;font-size:10.7px;font-weight:normal;color:#000;">0.02 %</div>
<div class="t" style="left:325.5px;width:600px;text-align:right;top:481.04px;font-size:10.7px;font-weight:normal;color:#000;">0.01 %</div>
<div class="a" style="left:467px;top:511.0px;width:84px;height:1px;background:#a0a0a0"></div>
<div class="a" style="left:551px;top:511.0px;width:377px;height:1px;background:#ececec"></div>
<div class="t" style="left:470.4px;top:498.38px;font-size:10.3px;font-weight:normal;color:#000;">5:13:17 PM</div>
<div class="t" style="left:31.4px;width:600px;text-align:right;top:498.04px;font-size:10.7px;font-weight:normal;color:#000;">52 Kbps</div>
<div class="t" style="left:115.7px;width:600px;text-align:right;top:498.04px;font-size:10.7px;font-weight:normal;color:#000;">39.2 Kbps</div>
<div class="t" style="left:220.5px;width:600px;text-align:right;top:498.04px;font-size:10.7px;font-weight:normal;color:#000;">0.05 %</div>
<div class="t" style="left:325.5px;width:600px;text-align:right;top:498.04px;font-size:10.7px;font-weight:normal;color:#000;">0.04 %</div>
<div class="a" style="left:467px;top:528.0px;width:84px;height:1px;background:#a0a0a0"></div>
<div class="a" style="left:551px;top:528.0px;width:377px;height:1px;background:#ececec"></div>
<div class="t" style="left:470.4px;top:515.38px;font-size:10.3px;font-weight:normal;color:#000;">5:13:15 PM</div>
<div class="t" style="left:31.4px;width:600px;text-align:right;top:515.04px;font-size:10.7px;font-weight:normal;color:#000;">22.1 Kbps</div>
<div class="t" style="left:115.7px;width:600px;text-align:right;top:515.04px;font-size:10.7px;font-weight:normal;color:#000;">15.4 Kbps</div>
<div class="t" style="left:220.5px;width:600px;text-align:right;top:515.04px;font-size:10.7px;font-weight:normal;color:#000;">0.02 %</div>
<div class="t" style="left:325.5px;width:600px;text-align:right;top:515.04px;font-size:10.7px;font-weight:normal;color:#000;">0.02 %</div>
<div class="a" style="left:467px;top:545.0px;width:84px;height:1px;background:#a0a0a0"></div>
<div class="a" style="left:551px;top:545.0px;width:377px;height:1px;background:#ececec"></div>
<div class="t" style="left:470.4px;top:532.38px;font-size:10.3px;font-weight:normal;color:#000;">5:13:02 PM</div>
<div class="t" style="left:31.4px;width:600px;text-align:right;top:532.04px;font-size:10.7px;font-weight:normal;color:#000;">47.7 Kbps</div>
<div class="t" style="left:115.7px;width:600px;text-align:right;top:532.04px;font-size:10.7px;font-weight:normal;color:#000;">26.9 Kbps</div>
<div class="t" style="left:220.5px;width:600px;text-align:right;top:532.04px;font-size:10.7px;font-weight:normal;color:#000;">0.05 %</div>
<div class="t" style="left:325.5px;width:600px;text-align:right;top:532.04px;font-size:10.7px;font-weight:normal;color:#000;">0.03 %</div>
<div class="a" style="left:467px;top:562.0px;width:84px;height:1px;background:#a0a0a0"></div>
<div class="a" style="left:551px;top:562.0px;width:377px;height:1px;background:#ececec"></div>
<div class="t" style="left:470.4px;top:549.38px;font-size:10.3px;font-weight:normal;color:#000;">5:12:46 PM</div>
<div class="t" style="left:31.4px;width:600px;text-align:right;top:549.04px;font-size:10.7px;font-weight:normal;color:#000;">86 Kbps</div>
<div class="t" style="left:115.7px;width:600px;text-align:right;top:549.04px;font-size:10.7px;font-weight:normal;color:#000;">74 Kbps</div>
<div class="t" style="left:220.5px;width:600px;text-align:right;top:549.04px;font-size:10.7px;font-weight:normal;color:#000;">0.09 %</div>
<div class="t" style="left:325.5px;width:600px;text-align:right;top:549.04px;font-size:10.7px;font-weight:normal;color:#000;">0.07 %</div>
<div class="a" style="left:467px;top:579.0px;width:84px;height:1px;background:#a0a0a0"></div>
<div class="a" style="left:551px;top:579.0px;width:377px;height:1px;background:#ececec"></div>
<div class="t" style="left:470.4px;top:566.38px;font-size:10.3px;font-weight:normal;color:#000;">5:12:31 PM</div>
<div class="t" style="left:31.4px;width:600px;text-align:right;top:566.04px;font-size:10.7px;font-weight:normal;color:#000;">24.1 Kbps</div>
<div class="t" style="left:115.7px;width:600px;text-align:right;top:566.04px;font-size:10.7px;font-weight:normal;color:#000;">17.4 Kbps</div>
<div class="t" style="left:220.5px;width:600px;text-align:right;top:566.04px;font-size:10.7px;font-weight:normal;color:#000;">0.02 %</div>
<div class="t" style="left:325.5px;width:600px;text-align:right;top:566.04px;font-size:10.7px;font-weight:normal;color:#000;">0.02 %</div>
<div class="a" style="left:467px;top:596.0px;width:84px;height:1px;background:#a0a0a0"></div>
<div class="a" style="left:551px;top:596.0px;width:377px;height:1px;background:#ececec"></div>
<div class="t" style="left:470.4px;top:583.38px;font-size:10.3px;font-weight:normal;color:#000;">5:12:14 PM</div>
<div class="t" style="left:31.4px;width:600px;text-align:right;top:583.04px;font-size:10.7px;font-weight:normal;color:#000;">47.3 Kbps</div>
<div class="t" style="left:115.7px;width:600px;text-align:right;top:583.04px;font-size:10.7px;font-weight:normal;color:#000;">26.5 Kbps</div>
<div class="t" style="left:220.5px;width:600px;text-align:right;top:583.04px;font-size:10.7px;font-weight:normal;color:#000;">0.05 %</div>
<div class="t" style="left:325.5px;width:600px;text-align:right;top:583.04px;font-size:10.7px;font-weight:normal;color:#000;">0.03 %</div>
<div class="a" style="left:467px;top:613.0px;width:84px;height:1px;background:#a0a0a0"></div>
<div class="a" style="left:551px;top:613.0px;width:377px;height:1px;background:#ececec"></div>
<div class="t" style="left:470.4px;top:600.38px;font-size:10.3px;font-weight:normal;color:#000;">5:11:59 PM</div>
<div class="t" style="left:31.4px;width:600px;text-align:right;top:600.04px;font-size:10.7px;font-weight:normal;color:#000;">23.4 Kbps</div>
<div class="t" style="left:115.7px;width:600px;text-align:right;top:600.04px;font-size:10.7px;font-weight:normal;color:#000;">11.8 Kbps</div>
<div class="t" style="left:220.5px;width:600px;text-align:right;top:600.04px;font-size:10.7px;font-weight:normal;color:#000;">0.02 %</div>
<div class="t" style="left:325.5px;width:600px;text-align:right;top:600.04px;font-size:10.7px;font-weight:normal;color:#000;">0.01 %</div>
<div class="a" style="left:988px;top:376px;width:16px;height:244px;background:#fff;border-left:1px solid #c8c8c8;border-right:1px solid #c8c8c8"></div>
<div class="a" style="left:988px;top:376px;width:16px;height:17px;background:#fff;border:1px solid #c8c8c8"></div>
<svg class="a" style="left:991px;top:382px" width="10" height="6"><path d="M1,5 L5,1 L9,5" fill="none" stroke="#555" stroke-width="1.2"/></svg>
<div class="a" style="left:988px;top:392px;width:16px;height:17px;background:#dadada;border:1px solid #b8b8b8"></div>
<div class="a" style="left:391px;top:313px;width:182px;height:224px;background:rgba(0,0,0,0.12);filter:blur(2px)"></div>
<div class="a" style="left:388px;top:310px;width:182px;height:225px;background:#f5f5f5;border:1px solid #1e3c8c"></div>
<div class="a" style="left:389px;top:311px;width:24px;height:222px;background:#e6f0fc"></div>
<div class="a" style="left:421px;top:359.0px;width:147px;height:1px;background:#6e9ad6"></div>
<div class="a" style="left:421px;top:385.5px;width:147px;height:1px;background:#6e9ad6"></div>
<div class="a" style="left:421px;top:434.0px;width:147px;height:1px;background:#6e9ad6"></div>
<div class="a" style="left:421px;top:460.0px;width:147px;height:1px;background:#6e9ad6"></div>
<div class="a" style="left:421px;top:509.0px;width:147px;height:1px;background:#6e9ad6"></div>
<div class="a" style="left:390px;top:436.5px;width:178px;height:21px;background:#fde9bc;border:1px solid #0c1c7a"></div>
<div class="t" style="left:420.9px;top:319.14px;font-size:10.7px;font-weight:normal;color:#0a0a20;"><u>C</u>opy</div>
<div class="t" style="left:420.9px;top:340.84px;font-size:10.7px;font-weight:normal;color:#0a0a20;"><u>D</u>elete Selected Gauge</div>
<div class="t" style="left:420.9px;top:367.64px;font-size:10.7px;font-weight:normal;color:#0a0a20;"><u>N</u>ew Gauge <span style="letter-spacing:0.8px">...</span></div>
<div class="t" style="left:420.9px;top:392.94px;font-size:10.7px;font-weight:normal;color:#0a0a20;"><u>R</u>eset</div>
<div class="t" style="left:420.9px;top:415.94px;font-size:10.7px;font-weight:normal;color:#0a0a20;"><u>R</u>efresh</div>
<div class="t" style="left:420.9px;top:441.74px;font-size:10.7px;font-weight:normal;color:#0a0a20;">Data <u>T</u>able</div>
<div class="t" style="left:420.9px;top:467.74px;font-size:10.7px;font-weight:normal;color:#0a0a20;">Historical Chart <span style="letter-spacing:0.8px">...</span></div>
<div class="t" style="left:420.9px;top:490.94px;font-size:10.7px;font-weight:normal;color:#0a0a20;"><u>H</u>istorical Statistics <span style="letter-spacing:0.8px">...</span></div>
<div class="t" style="left:420.9px;top:516.94px;font-size:10.7px;font-weight:normal;color:#0a0a20;"><u>P</u>roperties <span style="letter-spacing:0.8px">...</span></div>
<svg class="a" style="left:394px;top:316px" width="16" height="13" viewBox="0 0 16 13">
<path d="M0.5,0.5 L6,0.5 L8,2.5 L8,8.5 L0.5,8.5Z" fill="#f8fbff" stroke="#90a8d0" stroke-width="0.8"/>
<path d="M2,3 H6 M2,5 H6 M2,7 H6" stroke="#6a8ad0" stroke-width="0.7"/>
<path d="M6.5,3.5 L12.5,3.5 L15,6 L15,12.5 L6.5,12.5Z" fill="#eef4ff" stroke="#3a6ac8" stroke-width="0.9"/>
<path d="M8.5,7 H13 M8.5,9 H13 M8.5,11 H13" stroke="#3a6ac8" stroke-width="0.8"/></svg>
<svg class="a" style="left:393px;top:338px" width="15" height="14" viewBox="0 0 15 14">
<path d="M1,1.5 L13.5,12.5 M13.5,1 L1.5,12.5" stroke="#d03838" stroke-width="1.9"/></svg>
<svg class="a" style="left:393px;top:365px" width="15" height="15" viewBox="0 0 15 15">
<path d="M4.5,0 H10.5 L15,4.5 V10.5 L10.5,15 H4.5 L0,10.5 V4.5Z" fill="#0a0a0a"/>
<circle cx="7.5" cy="7.5" r="7" fill="#0a0a0a"/><circle cx="13.88" cy="9.21" r="0.75" fill="#f4f4f4"/><circle cx="12.17" cy="12.17" r="0.75" fill="#f4f4f4"/><circle cx="9.21" cy="13.88" r="0.75" fill="#f4f4f4"/><circle cx="5.79" cy="13.88" r="0.75" fill="#f4f4f4"/><circle cx="2.83" cy="12.17" r="0.75" fill="#f4f4f4"/><circle cx="1.12" cy="9.21" r="0.75" fill="#f4f4f4"/><circle cx="1.12" cy="5.79" r="0.75" fill="#f4f4f4"/><circle cx="2.83" cy="2.83" r="0.75" fill="#f4f4f4"/><circle cx="5.79" cy="1.12" r="0.75" fill="#f4f4f4"/><circle cx="9.21" cy="1.12" r="0.75" fill="#f4f4f4"/><circle cx="12.17" cy="2.83" r="0.75" fill="#f4f4f4"/><circle cx="13.88" cy="5.79" r="0.75" fill="#f4f4f4"/>
<path d="M3.4,11 A4.9,4.9 0 1 1 11.6,11" fill="none" stroke="#30e840" stroke-width="2.6"/>
<path d="M3.6,12.2 L11.4,12.2 L10.4,10.2 L4.6,10.2Z" fill="#a0a0a0"/>
<circle cx="7.5" cy="7.5" r="1.8" fill="#111"/>
<line x1="4.6" y1="4.4" x2="7.6" y2="7.6" stroke="#d04020" stroke-width="1.3"/></svg>
<svg class="a" style="left:394px;top:413px" width="14" height="16" viewBox="0 0 14 16">
<path d="M0.5,0.5 L9.5,0.5 L13,4 L13,15.5 L0.5,15.5Z" fill="#fcfcfc" stroke="#5a5a5a" stroke-width="1"/>
<path d="M9.5,0.5 V4 H13" fill="#fff" stroke="#5a5a5a" stroke-width="0.8"/>
<path d="M3.5,8 V5.5 Q3.5,4.5 5,4.5 H7.5" fill="none" stroke="#3838f8" stroke-width="1.4" stroke-dasharray="1.6 0.8"/>
<path d="M7,2 L10,4.5 L7,7Z" fill="#3838f8"/>
<path d="M9.5,7.5 V10 Q9.5,11 8,11 H5.5" fill="none" stroke="#3838f8" stroke-width="1.4" stroke-dasharray="1.6 0.8"/>
<path d="M6,8.5 L3,11 L6,13.5Z" fill="#3838f8"/></svg>
<svg class="a" style="left:393px;top:442px" width="16" height="13" viewBox="0 0 16 13">
<rect x="3" y="3.5" width="12" height="9" fill="none" stroke="#90c8f0" stroke-width="1"/>
<rect x="0.5" y="0.5" width="12.5" height="9" fill="#f8ecc8" stroke="#6a6a6a" stroke-width="1"/>
<path d="M2,3 H11.5 M2,5 H11.5 M2,7 H11.5" stroke="#6a6a6a" stroke-width="0.9"/></svg>
<svg class="a" style="left:393px;top:467px" width="16" height="13" viewBox="0 0 16 13">
<rect x="0.75" y="0.75" width="14.5" height="11.5" fill="#fff" stroke="#111" stroke-width="1.3"/>
<path d="M1.5,8.5 L3.5,8.5 L5,5.5 L7,7.5 L8.5,9 L9.7,4.5 L11.3,3.2 L12.2,6.7 L14.5,8.5" fill="none" stroke="#1020f0" stroke-width="1.1"/></svg>
<svg class="a" style="left:393px;top:491px" width="16" height="12" viewBox="0 0 16 12">
<rect x="0.5" y="0.5" width="15" height="11" fill="#909090" stroke="#707070" stroke-width="1"/>
<path d="M3.5,1 V11 M6.5,1 V11 M9.5,1 V11 M12.5,1 V11 M1,3.5 H15 M1,6 H15 M1,8.5 H15" stroke="#f0f0f0" stroke-width="1"/></svg>
<svg class="a" style="left:393px;top:514px" width="17" height="15" viewBox="0 0 17 15">
<path d="M0.5,3.5 L11.5,3.5 L11.5,14.5 L0.5,14.5Z" fill="#f8f8f8" stroke="#333" stroke-width="1"/>
<path d="M2.5,9.5 H3.5 M5,9.5 H10 M2.5,12 H3.5 M5,12 H10" stroke="#333" stroke-width="1"/>
<path d="M3,6 L7,1.5 L12,1.5 L14.5,3.5 L9,8.5Z" fill="#e8e8f0" stroke="#444" stroke-width="0.7"/>
<path d="M4,6 L6,4 L8,6 L6,8Z" fill="none" stroke="#555" stroke-width="0.6"/>
<path d="M14.5,0.5 L16,0 L16,6 L14.5,5Z" fill="#5030b0"/></svg>
</body></html>
